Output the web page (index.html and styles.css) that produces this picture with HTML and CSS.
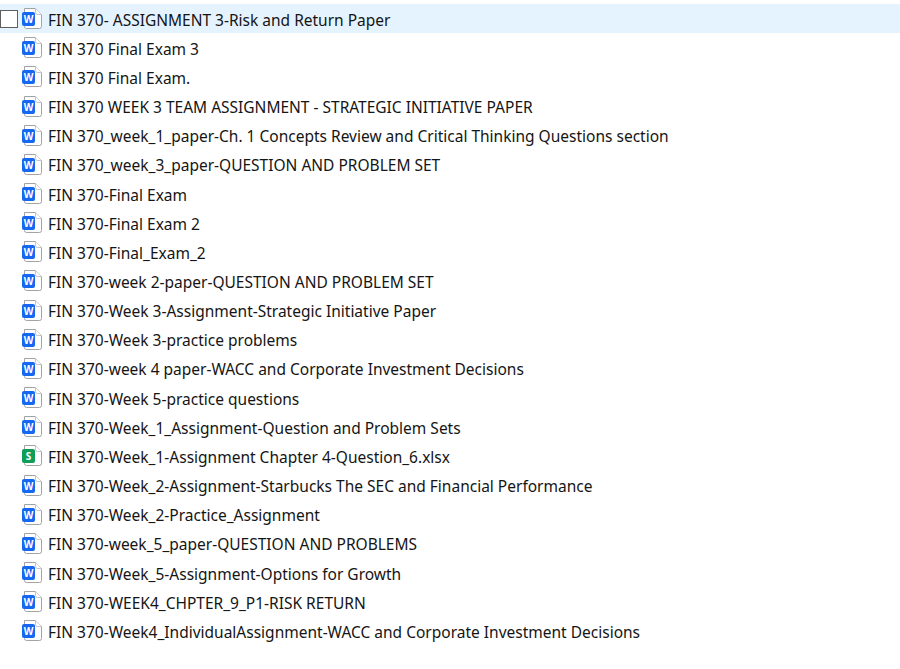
FILE: index.html
```html
<!DOCTYPE html>
<html lang="en">
<head>
    <meta charset="UTF-8">
    <meta name="viewport" content="width=device-width, initial-scale=1.0">
    <title>FIN 370</title>
    <link rel="stylesheet" href="styles.css">
</head>
<body>

<svg class="defs" width="0" height="0" aria-hidden="true">
    <symbol id="page" viewBox="0 0 20 21">
        <path d="M2.5 .5H13.5L19.5 6.5V18.5Q19.5 20.5 17.5 20.5H4.5Q2.5 20.5 2.5 18.5Z" fill="#fff" stroke="#a3a3a3"/>
        <path d="M13.5 .5V4.5Q13.5 6.5 15.5 6.5H19.5" fill="#fff" stroke="#c4c4c4"/>
    </symbol>
</svg>

<ul class="file-list" id="fileList">
    <li class="file-row selected">
        <span class="check"></span>
        <span class="icon"><svg width="20" height="21"><use href="#page"/></svg><b class="badge word">W</b></span>
        <span class="name">FIN 370- ASSIGNMENT 3-Risk and Return Paper</span>
    </li>
    <li class="file-row"><span class="icon"><svg width="20" height="21"><use href="#page"/></svg><b class="badge word">W</b></span><span class="name">FIN 370 Final Exam 3</span></li>
    <li class="file-row"><span class="icon"><svg width="20" height="21"><use href="#page"/></svg><b class="badge word">W</b></span><span class="name">FIN 370 Final Exam.</span></li>
    <li class="file-row"><span class="icon"><svg width="20" height="21"><use href="#page"/></svg><b class="badge word">W</b></span><span class="name">FIN 370 WEEK 3 TEAM ASSIGNMENT - STRATEGIC INITIATIVE PAPER</span></li>
    <li class="file-row"><span class="icon"><svg width="20" height="21"><use href="#page"/></svg><b class="badge word">W</b></span><span class="name">FIN 370_week_1_paper-Ch. 1 Concepts Review and Critical Thinking Questions section</span></li>
    <li class="file-row"><span class="icon"><svg width="20" height="21"><use href="#page"/></svg><b class="badge word">W</b></span><span class="name">FIN 370_week_3_paper-QUESTION AND PROBLEM SET</span></li>
    <li class="file-row"><span class="icon"><svg width="20" height="21"><use href="#page"/></svg><b class="badge word">W</b></span><span class="name">FIN 370-Final Exam</span></li>
    <li class="file-row"><span class="icon"><svg width="20" height="21"><use href="#page"/></svg><b class="badge word">W</b></span><span class="name">FIN 370-Final Exam 2</span></li>
    <li class="file-row"><span class="icon"><svg width="20" height="21"><use href="#page"/></svg><b class="badge word">W</b></span><span class="name">FIN 370-Final_Exam_2</span></li>
    <li class="file-row"><span class="icon"><svg width="20" height="21"><use href="#page"/></svg><b class="badge word">W</b></span><span class="name">FIN 370-week 2-paper-QUESTION AND PROBLEM SET</span></li>
    <li class="file-row"><span class="icon"><svg width="20" height="21"><use href="#page"/></svg><b class="badge word">W</b></span><span class="name">FIN 370-Week 3-Assignment-Strategic Initiative Paper</span></li>
    <li class="file-row"><span class="icon"><svg width="20" height="21"><use href="#page"/></svg><b class="badge word">W</b></span><span class="name">FIN 370-Week 3-practice problems</span></li>
    <li class="file-row"><span class="icon"><svg width="20" height="21"><use href="#page"/></svg><b class="badge word">W</b></span><span class="name">FIN 370-week 4 paper-WACC and Corporate Investment Decisions</span></li>
    <li class="file-row"><span class="icon"><svg width="20" height="21"><use href="#page"/></svg><b class="badge word">W</b></span><span class="name">FIN 370-Week 5-practice questions</span></li>
    <li class="file-row"><span class="icon"><svg width="20" height="21"><use href="#page"/></svg><b class="badge word">W</b></span><span class="name">FIN 370-Week_1_Assignment-Question and Problem Sets</span></li>
    <li class="file-row"><span class="icon"><svg width="20" height="21"><use href="#page"/></svg><b class="badge sheet">S</b></span><span class="name">FIN 370-Week_1-Assignment Chapter 4-Question_6.xlsx</span></li>
    <li class="file-row"><span class="icon"><svg width="20" height="21"><use href="#page"/></svg><b class="badge word">W</b></span><span class="name">FIN 370-Week_2-Assignment-Starbucks The SEC and Financial Performance</span></li>
    <li class="file-row"><span class="icon"><svg width="20" height="21"><use href="#page"/></svg><b class="badge word">W</b></span><span class="name">FIN 370-Week_2-Practice_Assignment</span></li>
    <li class="file-row"><span class="icon"><svg width="20" height="21"><use href="#page"/></svg><b class="badge word">W</b></span><span class="name">FIN 370-week_5_paper-QUESTION AND PROBLEMS</span></li>
    <li class="file-row"><span class="icon"><svg width="20" height="21"><use href="#page"/></svg><b class="badge word">W</b></span><span class="name">FIN 370-Week_5-Assignment-Options for Growth</span></li>
    <li class="file-row"><span class="icon"><svg width="20" height="21"><use href="#page"/></svg><b class="badge word">W</b></span><span class="name">FIN 370-WEEK4_CHPTER_9_P1-RISK RETURN</span></li>
    <li class="file-row"><span class="icon"><svg width="20" height="21"><use href="#page"/></svg><b class="badge word">W</b></span><span class="name">FIN 370-Week4_IndividualAssignment-WACC and Corporate Investment Decisions</span></li>
</ul>

</body>
</html>
```

FILE: styles.css
```css
html, body {
    margin: 0;
    height: 100%;
    overflow: hidden;
    background-color: #fff;
}
body {
    font-family: "Noto Sans", sans-serif;
    font-size: 15.5px;
    color: #151515;
}
.defs {
    display: block;
    height: 0;
}
.file-list {
    list-style: none;
    margin: 0;
    padding: 4px 0 0;
}
.file-row {
    position: relative;
    display: flex;
    align-items: center;
    height: 29.17px;
    padding-left: 22px;
}
.selected {
    background-color: #e5f3ff;
}
.check {
    position: absolute;
    left: 0;
    top: 5.5px;
    width: 18px;
    height: 18px;
    box-sizing: border-box;
    border: 1px solid #5f5f5f;
    background-color: #fff;
}
.icon {
    position: relative;
    flex: none;
    width: 20px;
    height: 21px;
    margin-right: 6px;
}
.icon svg {
    display: block;
}
.badge {
    position: absolute;
    left: 0;
    top: 4px;
    width: 13px;
    height: 14px;
    border-radius: 2px;
    color: #fff;
    font-size: 10px;
    font-weight: bold;
    line-height: 14px;
    text-align: center;
}
.word {
    background-color: #1668f0;
}
.sheet {
    background-color: #0f9d58;
}
.name {
    padding-top: 2px;
    white-space: nowrap;
}
```
